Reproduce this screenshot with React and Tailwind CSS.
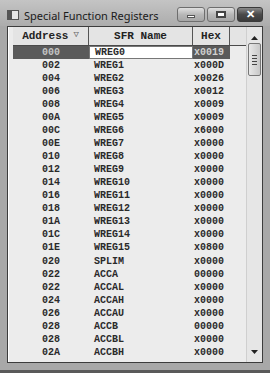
import React from 'react';

const rows = [
  ['000', 'WREG0', 'x0019'],
  ['002', 'WREG1', 'x000D'],
  ['004', 'WREG2', 'x0026'],
  ['006', 'WREG3', 'x0012'],
  ['008', 'WREG4', 'x0009'],
  ['00A', 'WREG5', 'x0009'],
  ['00C', 'WREG6', 'x6000'],
  ['00E', 'WREG7', 'x0000'],
  ['010', 'WREG8', 'x0000'],
  ['012', 'WREG9', 'x0000'],
  ['014', 'WREG10', 'x0000'],
  ['016', 'WREG11', 'x0000'],
  ['018', 'WREG12', 'x0000'],
  ['01A', 'WREG13', 'x0000'],
  ['01C', 'WREG14', 'x0000'],
  ['01E', 'WREG15', 'x0800'],
  ['020', 'SPLIM', 'x0000'],
  ['022', 'ACCA', '00000'],
  ['022', 'ACCAL', 'x0000'],
  ['024', 'ACCAH', 'x0000'],
  ['026', 'ACCAU', 'x0000'],
  ['028', 'ACCB', '00000'],
  ['028', 'ACCBL', 'x0000'],
  ['02A', 'ACCBH', 'x0000'],
];

const mono = { fontFamily: '"Liberation Mono", "Courier New", monospace' };

const WinButton = ({ children, dark }) => (
  <div
    className={`h-[15px] flex items-center justify-center rounded-[3px] border ${
      dark
        ? 'w-[26px] border-[#3a3a3a] bg-gradient-to-b from-[#8a8a8a] via-[#4a4a4a] to-[#3a3a3a]'
        : 'w-[28px] border-[#6e6e6e] bg-gradient-to-b from-[#e0e0e0] via-[#b8b8b8] to-[#a6a6a6]'
    }`}
  >
    {children}
  </div>
);

export default function App() {
  return (
    <div className="w-[270px] h-[373px] bg-[#a8a8a8] flex flex-col overflow-hidden border-b-[3px] border-[#5a5a5a]">
      {/* Title bar */}
      <div className="h-[26px] flex items-center pl-[7px] pr-[7px] pt-[4px] bg-gradient-to-b from-[#c4c4c4] to-[#acacac]">
        <div className="w-[12px] h-[10px] border border-[#555] bg-[#e8e8e8] flex">
          <div className="w-[4px] h-full bg-[#555]" />
        </div>
        <span className="ml-[5px] text-[11px] text-[#1a1a1a] leading-none" style={{ fontFamily: '"Noto Sans", "Open Sans", sans-serif' }}>
          Special Function Registers
        </span>
        <div className="ml-auto flex gap-[2px] -mt-[2px]">
          <WinButton>
            <div className="w-[8px] h-[3px] bg-white border border-[#555] mt-[5px]" />
          </WinButton>
          <WinButton>
            <div className="w-[10px] h-[7px] border-2 border-[#444] bg-white" />
          </WinButton>
          <WinButton dark>
            <span className="text-white text-[11px] font-bold leading-none" style={{ fontFamily: '"Liberation Sans", sans-serif' }}>✕</span>
          </WinButton>
        </div>
      </div>

      {/* Content */}
      <div className="mx-[7px] h-[337px] flex border border-[#3c3c3c] bg-[#ececec]">
        <div className="flex-1 flex flex-col pl-[4px] border-l border-white">
          {/* Header */}
          <div className="h-[19px] flex border-b border-[#4a4a4a] bg-[#e4e4e4] text-[11px] font-bold text-[#222]" style={mono}>
            <div className="w-[76px] flex items-center justify-center border-r border-[#555]">
              Address
              <span className="ml-[5px] text-[9px] text-[#666] font-normal">▽</span>
            </div>
            <div className="w-[104px] flex items-center justify-center border-r border-[#555]">SFR Name</div>
            <div className="w-[37px] flex items-center justify-center border-r border-[#555]">Hex</div>
            <div className="flex-1" />
          </div>
          {/* Rows */}
          <div className="flex flex-col text-[10px] font-bold text-[#2a2a2a]" style={mono}>
            {rows.map(([addr, name, hex], i) => {
              const sel = i === 0;
              return (
                <div key={i} className="h-[13.07px] flex items-center leading-none">
                  <div className={`w-[76px] h-full flex items-center justify-center ${sel ? 'bg-[#5a5a5a] text-[#c4c4c4]' : ''}`}>
                    {addr}
                  </div>
                  <div className={`w-[104px] h-full flex items-center pl-[5px] ${sel ? 'bg-white border border-[#777]' : ''}`}>
                    {name}
                  </div>
                  <div className={`w-[37px] h-full flex items-center pl-[1px] ${sel ? 'bg-[#5a5a5a] text-[#d0d0d0]' : ''}`}>
                    {hex}
                  </div>
                </div>
              );
            })}
          </div>
        </div>

        {/* Scrollbar */}
        <div className="w-[16px] flex flex-col items-center border-l border-[#cfcfcf] bg-[#e6e6e6]">
          <div className="h-[13px] flex items-end justify-center">
            <svg width="7" height="4" viewBox="0 0 7 4"><path d="M0 4 L3.5 0 L7 4 Z" fill="#222" /></svg>
          </div>
          <div className="mt-[3px] w-[13px] h-[33px] rounded-[2px] border border-[#777] bg-gradient-to-r from-[#e8e8e8] to-[#c8c8c8] flex flex-col items-center justify-center gap-[2px]">
            <div className="w-[5px] h-px bg-[#444]" />
            <div className="w-[5px] h-px bg-[#444]" />
            <div className="w-[5px] h-px bg-[#444]" />
            <div className="w-[5px] h-px bg-[#444]" />
          </div>
          <div className="flex-1" />
          <div className="h-[12px] flex items-start justify-center">
            <svg width="7" height="4" viewBox="0 0 7 4"><path d="M0 0 L3.5 4 L7 0 Z" fill="#222" /></svg>
          </div>
        </div>
      </div>
    </div>
  );
}
